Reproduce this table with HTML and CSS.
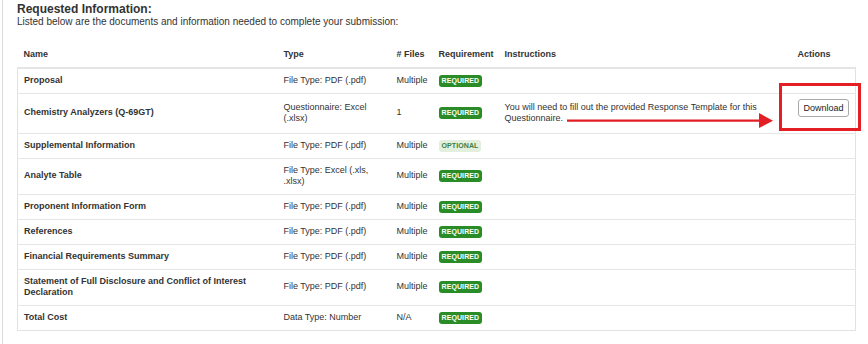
FILE: index.html
```html
<!DOCTYPE html>
<html>
<head>
<meta charset="utf-8">
<link rel="stylesheet" href="styles.css">
</head>
<body>
<div class="page">
  <div class="panel">
    <h2 class="title">Requested Information:</h2>
    <p class="subtitle">Listed below are the documents and information needed to complete your submission:</p>
    <table class="docs">
      <colgroup>
        <col class="c-name"><col class="c-type"><col class="c-files"><col class="c-req"><col class="c-instr"><col class="c-act">
      </colgroup>
      <thead>
        <tr>
          <th>Name</th><th>Type</th><th># Files</th><th>Requirement</th><th>Instructions</th><th class="th-act">Actions</th>
        </tr>
      </thead>
      <tbody>
        <tr><td class="nm">Proposal</td><td>File Type: PDF (.pdf)</td><td>Multiple</td><td><span class="badge req">REQUIRED</span></td><td></td><td></td></tr>
        <tr class="tall"><td class="nm">Chemistry Analyzers (Q-69GT)</td><td>Questionnaire: Excel (.xlsx)</td><td>1</td><td><span class="badge req">REQUIRED</span></td><td>You will need to fill out the provided Response Template for this Questionnaire.</td><td class="act"><span class="btn">Download</span></td></tr>
        <tr><td class="nm">Supplemental Information</td><td>File Type: PDF (.pdf)</td><td>Multiple</td><td><span class="badge opt">OPTIONAL</span></td><td></td><td></td></tr>
        <tr><td class="nm">Analyte Table</td><td>File Type: Excel (.xls, .xlsx)</td><td>Multiple</td><td><span class="badge req">REQUIRED</span></td><td></td><td></td></tr>
        <tr><td class="nm">Proponent Information Form</td><td>File Type: PDF (.pdf)</td><td>Multiple</td><td><span class="badge req">REQUIRED</span></td><td></td><td></td></tr>
        <tr><td class="nm">References</td><td>File Type: PDF (.pdf)</td><td>Multiple</td><td><span class="badge req">REQUIRED</span></td><td></td><td></td></tr>
        <tr><td class="nm">Financial Requirements Summary</td><td>File Type: PDF (.pdf)</td><td>Multiple</td><td><span class="badge req">REQUIRED</span></td><td></td><td></td></tr>
        <tr><td class="nm">Statement of Full Disclosure and Conflict of Interest Declaration</td><td>File Type: PDF (.pdf)</td><td>Multiple</td><td><span class="badge req">REQUIRED</span></td><td></td><td></td></tr>
        <tr><td class="nm">Total Cost</td><td>Data Type: Number</td><td>N/A</td><td><span class="badge req">REQUIRED</span></td><td></td><td></td></tr>
      </tbody>
    </table>
  </div>
  <div class="callout-box"></div>
  <svg class="callout-arrow" width="210" height="16" viewBox="0 0 210 16">
    <line x1="0" y1="7.7" x2="194" y2="7.7" stroke="#e31e24" stroke-width="2.2"/>
    <polygon points="192,0 206,7.7 192,15" fill="#e31e24"/>
  </svg>
</div>
</body>
</html>
```
FILE: styles.css
```css
html, body {
  margin: 0;
  padding: 0;
  background: #fff;
}
.page {
  position: relative;
  width: 868px;
  height: 344px;
  overflow: hidden;
  font-family: "Liberation Sans", Arial, sans-serif;
  color: #333;
}
.panel {
  margin-left: 2px;
  border-left: 1px solid #dcdcdc;
  height: 344px;
  box-sizing: border-box;
  padding: 3px 13px 0 14px;
}
.title {
  margin: 0;
  font-size: 12px;
  line-height: 13px;
  font-weight: bold;
  color: #333;
}
.subtitle {
  margin: 0;
  font-size: 10px;
  line-height: 12px;
  color: #333;
}
.docs {
  margin-top: 15px;
  width: 838px;
  border-collapse: collapse;
  table-layout: fixed;
  font-size: 9px;
  line-height: 11.5px;
}
.c-name { width: 260px; }
.c-type { width: 113px; }
.c-files { width: 42px; }
.c-req { width: 66px; }
.c-instr { width: 292px; }
.c-act { width: 65px; }
.docs th {
  text-align: left;
  font-weight: bold;
  padding: 6px 6px;
  border-bottom: 2px solid #e4e4e4;
  color: #333;
}
.docs th.th-act {
  text-align: right;
  padding-right: 25px;
}
.docs tbody {
  border: 1px solid #e2e2e2;
}
.docs td {
  padding: 6px 6px;
  border-top: 1px solid #e6e6e6;
  vertical-align: middle;
  color: #333;
}
.docs td.nm {
  font-weight: bold;
}
.docs td.act {
  text-align: right;
  padding-top: 5px;
  padding-bottom: 7px;
}
.badge {
  display: inline-block;
  vertical-align: top;
  height: 12px;
  line-height: 12px;
  padding: 0 3px;
  border-radius: 3px;
  font-size: 7px;
  font-weight: bold;
  letter-spacing: 0.1px;
}
.badge.req {
  background: #2a8c26;
  color: #fff;
}
.badge.opt {
  background: #e2efdc;
  color: #3d7f46;
}
.btn {
  display: inline-block;
  vertical-align: top;
  margin-bottom: 9px;
  height: 18px;
  box-sizing: border-box;
  line-height: 16px;
  padding: 0 4.5px;
  border: 1px solid #a9a9a9;
  border-radius: 3px;
  background: #fff;
  color: #222;
  font-size: 9px;
}
.callout-box {
  position: absolute;
  left: 779px;
  top: 83px;
  width: 82px;
  height: 48px;
  box-sizing: border-box;
  border: 3px solid #e31e24;
}
.callout-arrow {
  position: absolute;
  left: 567px;
  top: 113px;
}
```
